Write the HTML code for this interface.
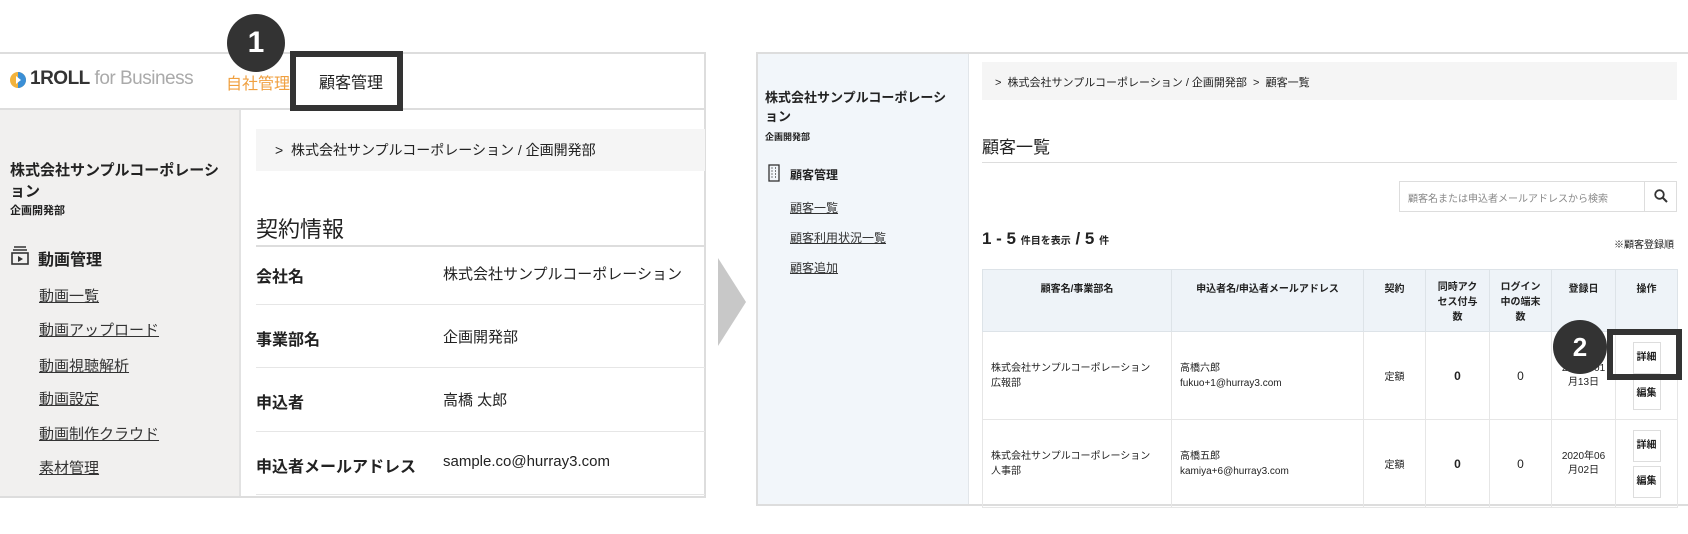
<!DOCTYPE html>
<html><head><meta charset="utf-8"><style>
*{margin:0;padding:0;box-sizing:border-box}
body{width:1688px;height:534px;background:#fff;position:relative;overflow:hidden;font-family:"Liberation Sans","Noto Sans CJK JP",sans-serif;color:#222}
.a{position:absolute;white-space:nowrap}
.u{text-decoration:underline;color:#333}
.b{font-weight:bold}
</style></head><body>
<!-- LEFT PANEL -->
<div class="a" style="left:0;top:52px;width:706px;height:446px;border:2px solid #ddd;border-left:none"></div>
<div class="a" style="left:0;top:108px;width:705px;height:2px;background:#ddd"></div>
<div class="a" style="left:0;top:110px;width:241px;height:386px;background:#f1f0ef;border-right:2px solid #e2e2e2"></div>
<svg class="a" style="left:8px;top:70px" width="20" height="20"><circle cx="10" cy="10" r="8" fill="#f2b33d"/><path d="M10 2a8 8 0 0 1 0 16z" fill="#3b8fd6"/><path d="M8 6l5 4-5 4z" fill="#fff"/></svg>
<div class="a" style="left:30px;top:68px;font-size:19px;letter-spacing:-0.5px"><span class="b" style="color:#333">1ROLL</span><span style="color:#aaa"> for Business</span></div>
<div class="a" style="left:226px;top:70px;font-size:16px;color:#f0a040">自社管理</div>
<div class="a" style="left:290px;top:51px;width:113px;height:60px;border:6px solid #333;background:#fff"></div>
<div class="a" style="left:319px;top:69px;font-size:16px">顧客管理</div>
<div class="a" style="left:227px;top:14px;width:58px;height:58px;border-radius:50%;background:#333;color:#fff;font-size:30px;font-weight:bold;text-align:center;line-height:58px">1</div>
<div class="a b" style="left:10px;top:160px;font-size:15px;line-height:21px;white-space:normal;width:220px">株式会社サンプルコーポレーション</div>
<div class="a b" style="left:10px;top:202px;font-size:11px">企画開発部</div>
<svg class="a" style="left:11px;top:245px" width="18" height="20"><path d="M3 2h12M2 5h14" stroke="#333" stroke-width="1.6"/><rect x="1" y="8" width="16" height="11" fill="none" stroke="#333" stroke-width="1.6"/><path d="M7 11l5 3-5 3z" fill="#333"/></svg>
<div class="a b" style="left:38px;top:246px;font-size:16px">動画管理</div>
<div class="a u" style="left:39px;top:285px;font-size:15px">動画一覧</div>
<div class="a u" style="left:39px;top:319px;font-size:15px">動画アップロード</div>
<div class="a u" style="left:39px;top:355px;font-size:15px">動画視聴解析</div>
<div class="a u" style="left:39px;top:388px;font-size:15px">動画設定</div>
<div class="a u" style="left:39px;top:423px;font-size:15px">動画制作クラウド</div>
<div class="a u" style="left:39px;top:457px;font-size:15px">素材管理</div>
<div class="a" style="left:256px;top:129px;width:449px;height:42px;background:#f5f5f5"></div>
<div class="a" style="left:275px;top:140px;font-size:14px">&gt;&nbsp; 株式会社サンプルコーポレーション / 企画開発部</div>
<div class="a" style="left:256px;top:212px;font-size:22px">契約情報</div>
<div class="a" style="left:256px;top:245px;width:449px;height:2px;background:#ddd"></div>
<div class="a b" style="left:256px;top:263px;font-size:16px">会社名</div>
<div class="a" style="left:443px;top:263px;font-size:15px">株式会社サンプルコーポレーション</div>
<div class="a" style="left:256px;top:304px;width:449px;height:1px;background:#e6e6e6"></div>
<div class="a b" style="left:256px;top:326px;font-size:16px">事業部名</div>
<div class="a" style="left:443px;top:326px;font-size:15px">企画開発部</div>
<div class="a" style="left:256px;top:367px;width:449px;height:1px;background:#e6e6e6"></div>
<div class="a b" style="left:256px;top:389px;font-size:16px">申込者</div>
<div class="a" style="left:443px;top:389px;font-size:15px">高橋 太郎</div>
<div class="a" style="left:256px;top:431px;width:449px;height:1px;background:#e6e6e6"></div>
<div class="a b" style="left:256px;top:453px;font-size:16px">申込者メールアドレス</div>
<div class="a" style="left:443px;top:453px;font-size:15px">sample.co@hurray3.com</div>
<div class="a" style="left:256px;top:494px;width:449px;height:1px;background:#e6e6e6"></div>
<!-- ARROW -->
<svg class="a" style="left:718px;top:258px" width="28" height="88"><path d="M0 0L28 44L0 88z" fill="#c8c8c8"/></svg>
<!-- RIGHT PANEL -->
<div class="a" style="left:756px;top:52px;width:940px;height:454px;border:2px solid #ddd"></div>
<div class="a" style="left:758px;top:54px;width:211px;height:450px;background:#f2f6fa;border-right:1px solid #e2e6ea"></div>
<div class="a b" style="left:765px;top:88px;font-size:13px;line-height:19px;white-space:normal;width:185px">株式会社サンプルコーポレーション</div>
<div class="a b" style="left:765px;top:130px;font-size:9px">企画開発部</div>
<svg class="a" style="left:768px;top:164px" width="12" height="18"><rect x="1" y="1" width="10" height="16" fill="none" stroke="#333" stroke-width="1.3"/><path d="M3.5 4h1M7 4h1M3.5 7h1M7 7h1M3.5 10h1M7 10h1M3.5 13h1M7 13h1" stroke="#333" stroke-width="1.3"/></svg>
<div class="a b" style="left:790px;top:166px;font-size:12px">顧客管理</div>
<div class="a u" style="left:790px;top:199px;font-size:12px">顧客一覧</div>
<div class="a u" style="left:790px;top:229px;font-size:12px">顧客利用状況一覧</div>
<div class="a u" style="left:790px;top:259px;font-size:12px">顧客追加</div>
<div class="a" style="left:982px;top:62px;width:695px;height:38px;background:#f5f5f5"></div>
<div class="a" style="left:995px;top:74px;font-size:11px">&gt;&nbsp; 株式会社サンプルコーポレーション / 企画開発部 &nbsp;&gt;&nbsp; 顧客一覧</div>
<div class="a" style="left:982px;top:133px;font-size:17px">顧客一覧</div>
<div class="a" style="left:982px;top:162px;width:695px;height:1px;background:#ddd"></div>
<div class="a" style="left:1399px;top:181px;width:246px;height:31px;border:1px solid #ddd"></div>
<div class="a" style="left:1408px;top:190px;font-size:10px;color:#888">顧客名または申込者メールアドレスから検索</div>
<div class="a" style="left:1645px;top:181px;width:32px;height:31px;border:1px solid #ddd;border-left:none"></div>
<svg class="a" style="left:1654px;top:189px" width="14" height="14"><circle cx="5.5" cy="5.5" r="4.3" fill="none" stroke="#333" stroke-width="1.8"/><path d="M8.5 8.5L13 13" stroke="#333" stroke-width="2"/></svg>
<div class="a b" style="left:982px;top:229px;font-size:17px">1 - 5 <span style="font-size:10px">件目を表示</span> / 5 <span style="font-size:10px">件</span></div>
<div class="a" style="left:1614px;top:236px;font-size:10px">※顧客登録順</div>
<table class="a" style="left:982px;top:269px;border-collapse:collapse;font-size:10px;text-align:center">
<tr style="background:#eef3f8;height:62px;vertical-align:top;font-weight:bold">
<td style="width:189px;border:1px solid #dde3e8;padding-top:10px">顧客名/事業部名</td>
<td style="width:192px;border:1px solid #dde3e8;padding-top:10px">申込者名/申込者メールアドレス</td>
<td style="width:62px;border:1px solid #dde3e8;padding-top:10px">契約</td>
<td style="width:64px;border:1px solid #dde3e8;padding-top:10px;line-height:15px">同時アク<br>セス付与<br>数</td>
<td style="width:62px;border:1px solid #dde3e8;padding-top:10px;line-height:15px">ログイン<br>中の端末<br>数</td>
<td style="width:64px;border:1px solid #dde3e8;padding-top:10px">登録日</td>
<td style="width:62px;border:1px solid #dde3e8;padding-top:10px">操作</td></tr>
<tr style="height:88px">
<td style="border:1px solid #e6e6e6;text-align:left;padding-left:8px;line-height:15px">株式会社サンプルコーポレーション<br>広報部</td>
<td style="border:1px solid #e6e6e6;text-align:left;padding-left:8px;line-height:15px">高橋六郎<br>fukuo+1@hurray3.com</td>
<td style="border:1px solid #e6e6e6">定額</td><td style="border:1px solid #e6e6e6;font-weight:bold;font-size:12px">0</td><td style="border:1px solid #e6e6e6;font-size:12px">0</td>
<td style="border:1px solid #e6e6e6;line-height:14px">2021年01<br>月13日</td>
<td style="border:1px solid #e6e6e6"><div style="width:28px;height:32px;border:1px solid #ddd;margin:0 auto 4px;line-height:30px;font-weight:bold">詳細</div><div style="width:28px;height:32px;border:1px solid #ddd;margin:0 auto;line-height:30px;font-weight:bold">編集</div></td></tr>
<tr style="height:88px">
<td style="border:1px solid #e6e6e6;text-align:left;padding-left:8px;line-height:15px">株式会社サンプルコーポレーション<br>人事部</td>
<td style="border:1px solid #e6e6e6;text-align:left;padding-left:8px;line-height:15px">高橋五郎<br>kamiya+6@hurray3.com</td>
<td style="border:1px solid #e6e6e6">定額</td><td style="border:1px solid #e6e6e6;font-weight:bold;font-size:12px">0</td><td style="border:1px solid #e6e6e6;font-size:12px">0</td>
<td style="border:1px solid #e6e6e6;line-height:14px">2020年06<br>月02日</td>
<td style="border:1px solid #e6e6e6"><div style="width:28px;height:32px;border:1px solid #ddd;margin:0 auto 4px;line-height:30px;font-weight:bold">詳細</div><div style="width:28px;height:32px;border:1px solid #ddd;margin:0 auto;line-height:30px;font-weight:bold">編集</div></td></tr>
</table>
<div class="a" style="left:1607px;top:329px;width:75px;height:51px;border:6px solid #333"></div>
<div class="a" style="left:1553px;top:320px;width:54px;height:54px;border-radius:50%;background:#333;color:#fff;font-size:26px;font-weight:bold;text-align:center;line-height:54px">2</div>
</body></html>
